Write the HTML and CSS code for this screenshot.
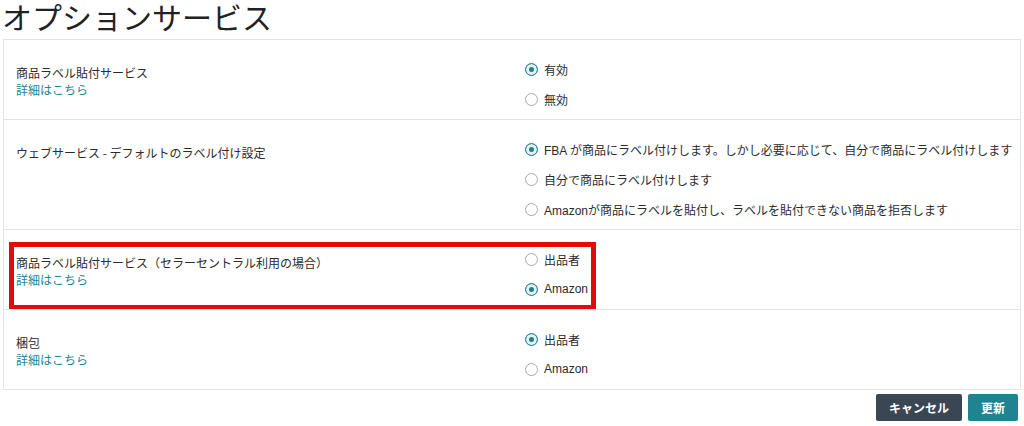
FILE: index.html
```html
<!DOCTYPE html>
<html lang="ja">
<head>
<meta charset="utf-8">
<title>オプションサービス</title>
<link rel="stylesheet" href="styles.css">
</head>
<body>
<h1 class="title">オプションサービス</h1>
<div class="card">
  <div class="row">
    <div class="label-col">
      <div class="label">商品ラベル貼付サービス</div>
      <a class="link" href="#">詳細はこちら</a>
    </div>
    <div class="options">
      <div class="option"><span class="radio checked"></span><span>有効</span></div>
      <div class="option"><span class="radio"></span><span>無効</span></div>
    </div>
  </div>
  <div class="row">
    <div class="label-col">
      <div class="label">ウェブサービス - デフォルトのラベル付け設定</div>
    </div>
    <div class="options">
      <div class="option"><span class="radio checked"></span><span>FBA が商品にラベル付けします。しかし必要に応じて、自分で商品にラベル付けします</span></div>
      <div class="option"><span class="radio"></span><span>自分で商品にラベル付けします</span></div>
      <div class="option"><span class="radio"></span><span>Amazonが商品にラベルを貼付し、ラベルを貼付できない商品を拒否します</span></div>
    </div>
  </div>
  <div class="row highlighted">
    <div class="label-col">
      <div class="label">商品ラベル貼付サービス（セラーセントラル利用の場合）</div>
      <a class="link" href="#">詳細はこちら</a>
    </div>
    <div class="options">
      <div class="option"><span class="radio"></span><span>出品者</span></div>
      <div class="option"><span class="radio checked"></span><span>Amazon</span></div>
    </div>
    <div class="red-box"></div>
  </div>
  <div class="row">
    <div class="label-col">
      <div class="label">梱包</div>
      <a class="link" href="#">詳細はこちら</a>
    </div>
    <div class="options">
      <div class="option"><span class="radio checked"></span><span>出品者</span></div>
      <div class="option"><span class="radio"></span><span>Amazon</span></div>
    </div>
  </div>
</div>
<div class="actions">
  <button class="btn btn-cancel">キャンセル</button>
  <button class="btn btn-update">更新</button>
</div>
</body>
</html>
```
FILE: styles.css
```css
html, body {
  margin: 0;
  padding: 0;
  background: #ffffff;
}
body {
  font-family: "Liberation Sans", "Noto Sans CJK JP", sans-serif;
  color: #2b2b2b;
  font-size: 12px;
  width: 1024px;
  height: 426px;
  overflow: hidden;
}
.title {
  margin: 0 0 6px 0;
  padding-left: 2px;
  font-family: "Noto Sans CJK JP", sans-serif;
  font-weight: 400;
  font-size: 30px;
  line-height: 33px;
  color: #222222;
}
.card {
  margin: 0 3px;
  border: 1px solid #e3e3e3;
}
.row {
  position: relative;
  display: grid;
  grid-template-columns: 517px 1fr;
  border-top: 1px solid #e3e3e3;
}
.row:first-child {
  border-top: none;
}
.label-col {
  padding: 24px 0 0 12px;
  display: flex;
  flex-direction: column;
  align-items: flex-start;
  line-height: 17px;
}
.label {
  font-family: "Noto Sans CJK JP", sans-serif;
  color: #2b2b2b;
}
.link {
  font-family: "Noto Sans CJK JP", sans-serif;
  color: #1f8290;
  text-decoration: none;
}
.options {
  display: flex;
  flex-direction: column;
  gap: 10px;
  padding: 19px 0 10px 4px;
}
.option {
  display: flex;
  align-items: center;
  height: 20px;
  gap: 6px;
  color: #2b2b2b;
}
.radio {
  flex: none;
  width: 13px;
  height: 13px;
  box-sizing: border-box;
  border-radius: 50%;
  border: 1px solid #a9a9a9;
  background: #ffffff;
}
.radio.checked {
  border: 1px solid #2a8793;
  background: #1f7f8b;
  box-shadow: inset 0 0 0 3px #e3eff1;
}
.red-box {
  position: absolute;
  left: 5px;
  top: 12px;
  width: 587px;
  height: 68px;
  box-sizing: border-box;
  border: 5px solid #e10b0b;
  pointer-events: none;
}
.actions {
  display: flex;
  justify-content: flex-end;
  gap: 6px;
  margin-top: 4px;
  padding-right: 6px;
}
.btn {
  height: 27px;
  border: none;
  border-radius: 2px;
  color: #ffffff;
  font-family: "Noto Sans CJK JP", sans-serif;
  font-size: 12px;
  font-weight: 700;
  padding: 0;
  cursor: pointer;
}
.btn-cancel {
  width: 86px;
  background: #3a4653;
}
.btn-update {
  width: 50px;
  background: #1f8391;
}
```
